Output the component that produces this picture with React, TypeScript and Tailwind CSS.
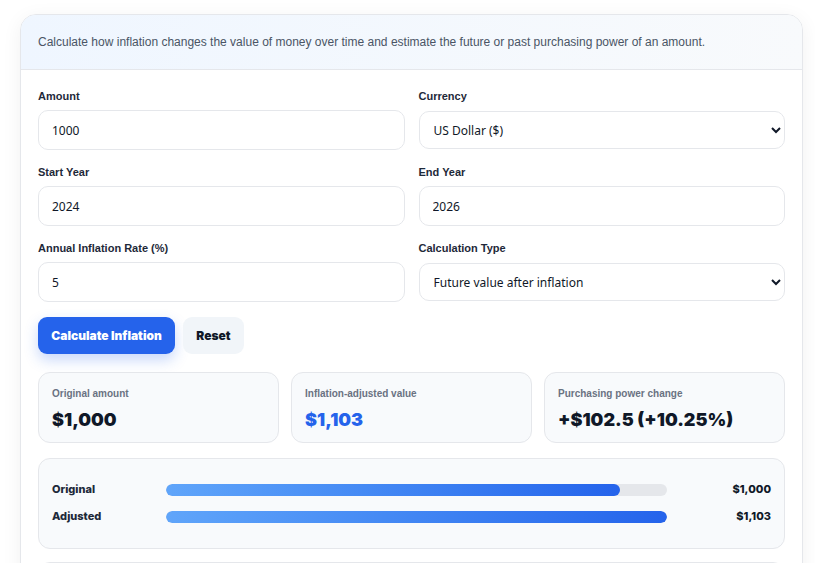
import React, { useState } from "react"

const sans = "font-['Liberation_Sans',Arial,sans-serif]"
const ui = "font-['Noto_Sans','Open_Sans',sans-serif]"

function Field({ label, children }: { label: string; children: React.ReactNode }) {
  return (
    <div className="flex flex-col">
      <label className="mb-[7px] text-[11px] font-bold leading-[14px] text-gray-800">{label}</label>
      {children}
    </div>
  )
}

function Stat({ label, value, accent }: { label: string; value: string; accent?: boolean }) {
  return (
    <div className="flex h-[71px] flex-col rounded-xl border border-gray-200 bg-[#f8fafc] px-[13px] pt-[15px]">
      <div className="text-[10px] font-bold leading-[12px] text-gray-500">{label}</div>
      <div
        className={`mt-[8px] font-['Inter',sans-serif] text-[18px] font-black leading-[24px] ${
          accent ? "text-[#2563eb]" : "text-gray-900"
        }`}
      >
        {value}
      </div>
    </div>
  )
}

function Bar({ label, value, pct }: { label: string; value: string; pct: number }) {
  return (
    <div className="flex h-[27px] items-center">
      <div className="w-[114px] font-['Inter',sans-serif] text-[11px] font-extrabold text-gray-800">{label}</div>
      <div className="h-[12px] w-[501px] overflow-hidden rounded-full bg-gray-200">
        <div
          className="h-full rounded-full bg-gradient-to-r from-[#60a5fa] to-[#2563eb]"
          style={{ width: `${pct}%` }}
        />
      </div>
      <div className="flex-1 text-right font-['Inter',sans-serif] text-[11px] font-extrabold text-gray-900">{value}</div>
    </div>
  )
}

export default function App() {
  const [amount] = useState("1000")
  const inputCls = `h-[40px] rounded-[10px] border border-gray-200 bg-white px-[13px] text-[12px] text-gray-900 outline-none ${ui}`
  const selectCls = `h-[38px] mt-[1px] mb-[1px] rounded-[10px] border border-gray-200 bg-white pl-[10px] pr-[8px] text-[12px] text-gray-900 outline-none ${ui}`

  return (
    <div className={`h-[563px] overflow-hidden bg-white pl-[20px] pr-[12px] pt-[14px] ${sans}`}>
      <div className="overflow-hidden rounded-t-[16px] border border-gray-200 shadow-[0_4px_20px_rgba(15,23,42,0.06)]">
        <div className="flex h-[55px] items-center border-b border-gray-200 bg-gradient-to-r from-[#eff6ff] to-[#f8fafc] px-[17px]">
          <p className="text-[12px] text-gray-600">
            Calculate how inflation changes the value of money over time and estimate the future or past purchasing
            power of an amount.
          </p>
        </div>

        <div className="px-[17px] pt-[19px]">
          <div className="grid grid-cols-2 gap-x-[14px] gap-y-[15px]">
            <Field label="Amount">
              <input className={inputCls} defaultValue={amount} />
            </Field>
            <Field label="Currency">
              <select className={selectCls} defaultValue="usd">
                <option value="usd">US Dollar ($)</option>
              </select>
            </Field>
            <Field label="Start Year">
              <input className={inputCls} defaultValue="2024" />
            </Field>
            <Field label="End Year">
              <input className={inputCls} defaultValue="2026" />
            </Field>
            <Field label="Annual Inflation Rate (%)">
              <input className={inputCls} defaultValue="5" />
            </Field>
            <Field label="Calculation Type">
              <select className={selectCls} defaultValue="future">
                <option value="future">Future value after inflation</option>
              </select>
            </Field>
          </div>

          <div className="mt-[15px] flex gap-[8px]">
            <button className="h-[37px] w-[137px] rounded-[9px] bg-[#2563eb] font-['Inter',sans-serif] text-[12px] font-black text-white shadow-[0_6px_14px_rgba(37,99,235,0.25)]">
              Calculate Inflation
            </button>
            <button className="h-[37px] w-[61px] rounded-[9px] bg-[#f1f5f9] font-['Inter',sans-serif] text-[12px] font-black text-gray-900">
              Reset
            </button>
          </div>

          <div className="mt-[18px] grid grid-cols-3 gap-[12px]">
            <Stat label="Original amount" value="$1,000" />
            <Stat label="Inflation-adjusted value" value="$1,103" accent />
            <Stat label="Purchasing power change" value="+$102.5 (+10.25%)" />
          </div>

          <div className="mt-[15px] rounded-xl border border-gray-200 bg-[#f8fafc] px-[13px] pb-[18px] pt-[17px]">
            <Bar label="Original" value="$1,000" pct={90.6} />
            <Bar label="Adjusted" value="$1,103" pct={100} />
          </div>

          <div className="mt-[13px] h-[40px] rounded-t-xl border border-gray-200 bg-[#f8fafc]" />
        </div>
      </div>
    </div>
  )
}
